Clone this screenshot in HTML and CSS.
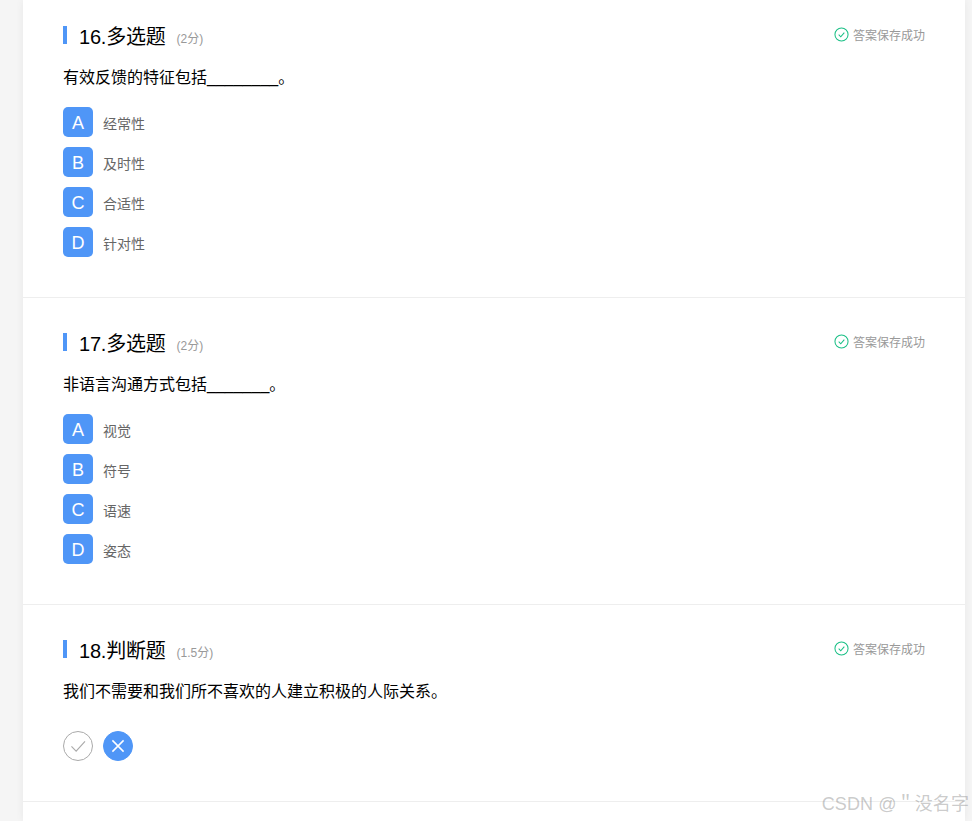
FILE: index.html
```html
<!DOCTYPE html>
<html lang="zh">
<head>
<meta charset="utf-8">
<title>答题</title>
<link rel="stylesheet" href="styles.css">
</head>
<body>
<main class="paper">
  <section class="question first">
    <header class="q-head">
      <h2 class="q-title">16.多选题</h2><span class="q-score">(2分)</span>
      <span class="q-status"><svg class="ok" viewBox="0 0 16 16"><circle cx="8" cy="8" r="7" /><path d="M5 8.2l2.2 2.2L11 6" /></svg>答案保存成功</span>
    </header>
    <p class="q-text">有效反馈的特征包括________。</p>
    <ul class="options">
      <li class="option"><span class="letter">A</span><span class="label">经常性</span></li>
      <li class="option"><span class="letter">B</span><span class="label">及时性</span></li>
      <li class="option"><span class="letter">C</span><span class="label">合适性</span></li>
      <li class="option"><span class="letter">D</span><span class="label">针对性</span></li>
    </ul>
  </section>
  <section class="question">
    <header class="q-head">
      <h2 class="q-title">17.多选题</h2><span class="q-score">(2分)</span>
      <span class="q-status"><svg class="ok" viewBox="0 0 16 16"><circle cx="8" cy="8" r="7" /><path d="M5 8.2l2.2 2.2L11 6" /></svg>答案保存成功</span>
    </header>
    <p class="q-text">非语言沟通方式包括_______。</p>
    <ul class="options">
      <li class="option"><span class="letter">A</span><span class="label">视觉</span></li>
      <li class="option"><span class="letter">B</span><span class="label">符号</span></li>
      <li class="option"><span class="letter">C</span><span class="label">语速</span></li>
      <li class="option"><span class="letter">D</span><span class="label">姿态</span></li>
    </ul>
  </section>
  <section class="question judge">
    <header class="q-head">
      <h2 class="q-title">18.判断题</h2><span class="q-score">(1.5分)</span>
      <span class="q-status"><svg class="ok" viewBox="0 0 16 16"><circle cx="8" cy="8" r="7" /><path d="M5 8.2l2.2 2.2L11 6" /></svg>答案保存成功</span>
    </header>
    <p class="q-text">我们不需要和我们所不喜欢的人建立积极的人际关系。</p>
    <div class="tf">
      <span class="tf-btn"><svg viewBox="0 0 30 30"><path d="M8 15.500l5 5L22.500 10" /></svg></span>
      <span class="tf-btn on"><svg viewBox="0 0 30 30"><path d="M9 9l12 12M21 9L9 21" /></svg></span>
    </div>
  </section>
</main>
<div class="watermark">CSDN @＂没名字</div>
</body>
</html>
```
FILE: styles.css
```css
* { box-sizing: border-box; }
html, body { height: 100%; }
body {
  margin: 0;
  height: 821px;
  overflow: hidden;
  background: #f5f5f5;
  font-family: "Liberation Sans", "Noto Sans CJK SC", sans-serif;
  color: #000;
}
.paper {
  width: 942px;
  margin-left: 23px;
  height: 821px;
  background: #fff;
  box-shadow: 0 0 8px rgba(0, 0, 0, 0.06);
}
.question {
  height: 307px;
  padding: 35px 40px 0;
  border-bottom: 1px solid #eee;
}
.question.first { height: 298px; padding-top: 26px; }
.question.judge { height: 197px; }
.q-head {
  display: flex;
  align-items: center;
  height: 18px;
  border-left: 4px solid #4f96f7;
  padding-left: 12px;
}
.q-title {
  margin: 4px 0 0;
  font-size: 20px;
  font-weight: 400;
  line-height: 18px;
  letter-spacing: -0.2px;
}
.q-score {
  margin-left: 11px;
  margin-top: 4px;
  font-size: 12px;
  color: #999;
}
.q-status {
  margin-left: auto;
  margin-top: -2px;
  display: flex;
  align-items: center;
  gap: 4px;
  font-size: 12px;
  color: #999;
}
.ok { width: 15px; height: 15px; fill: none; stroke: #19bf85; stroke-width: 1.1; }
.q-text {
  margin: 22px 0 0;
  font-size: 16px;
  line-height: 24px;
}
.options { list-style: none; margin: 17px 0 0; padding: 0; }
.option { display: flex; align-items: center; height: 30px; margin-bottom: 10px; }
.letter {
  width: 30px;
  height: 30px;
  border-radius: 5px;
  background: #4f96f7;
  color: #fff;
  font-size: 18px;
  line-height: 33px;
  text-align: center;
}
.label { margin-left: 10px; margin-top: 1px; font-size: 14px; color: #666; }
.tf { display: flex; gap: 10px; margin-top: 27px; }
.tf-btn {
  width: 30px;
  height: 30px;
  border-radius: 50%;
  border: 1px solid #aaa;
  display: block;
}
.tf-btn svg { display: block; width: 28px; height: 28px; fill: none; stroke: #aaa; stroke-width: 1.2; }
.tf-btn.on { background: #4f96f7; border-color: #4f96f7; }
.tf-btn.on svg { stroke: #fff; stroke-width: 1.6; }
.watermark {
  position: absolute;
  right: 3px;
  top: 791px;
  font-size: 18px;
  line-height: 26px;
  letter-spacing: 0.1px;
  color: rgba(120, 120, 120, 0.4);
  white-space: nowrap;
}
```
